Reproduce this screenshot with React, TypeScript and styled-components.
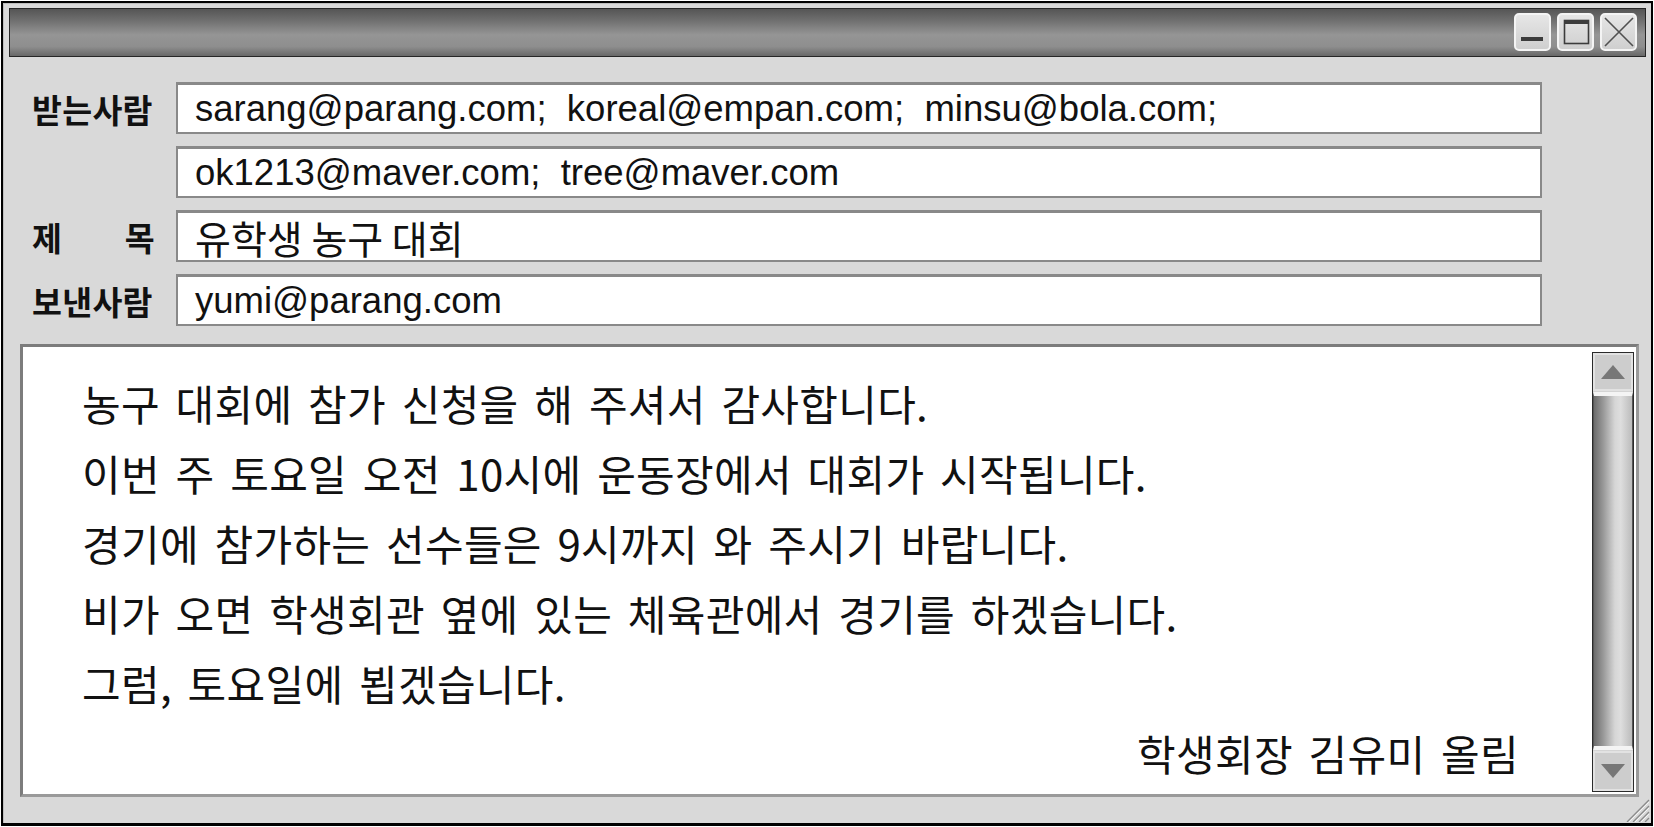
import React from "react";
import styled, { createGlobalStyle } from "styled-components";

const Global = createGlobalStyle`
  html, body { margin: 0; padding: 0; background: #fff; overflow: hidden; }
  #root { width: 1654px; height: 827px; }
`;

const Window = styled.div`
  position: relative;
  margin: 1px;
  width: 1652px;
  height: 825px;
  box-sizing: border-box;
  border: 2px solid #000;
  border-bottom-width: 3px;
  background: #d9d9d9;
  box-shadow: inset 1px 1px 0 #bdbdbd;
  display: flex;
  flex-direction: column;
`;

const TitleBar = styled.div`
  margin: 5px 5px 0 6px;
  height: 49px;
  box-sizing: border-box;
  border: 1px solid #262626;
  background: linear-gradient(
    to bottom,
    #555555 0%,
    #707070 25%,
    #959595 55%,
    #8e8e8e 80%,
    #686868 100%
  );
  display: flex;
  justify-content: flex-end;
  align-items: flex-start;
  gap: 6px;
  padding: 4px 8px 0 0;
`;

const TitleButton = styled.div`
  width: 37px;
  height: 38px;
  box-sizing: border-box;
  border: 2px solid #f4f4f4;
  border-radius: 5px;
  background: linear-gradient(to bottom, #e6e6e6, #cfcfcf);
  display: flex;
  align-items: center;
  justify-content: center;
`;

const Form = styled.div`
  margin: 25px 0 0 29px;
  display: grid;
  grid-template-columns: 123px 1366px;
  column-gap: 21px;
  row-gap: 12px;
`;

const Label = styled.div<{ $spread?: boolean }>`
  height: 52px;
  display: flex;
  align-items: center;
  justify-content: ${(p) => (p.$spread ? "space-between" : "flex-start")};
  font-family: "Noto Sans CJK KR", "Noto Sans", sans-serif;
  font-weight: 700;
  font-size: 32.5px;
  letter-spacing: 0.3px;
  color: #111;
  white-space: nowrap;
`;

const Field = styled.div<{ $korean?: boolean }>`
  height: 52px;
  box-sizing: border-box;
  background: #fff;
  border: 2px solid #898989;
  border-top-width: 3px;
  display: flex;
  align-items: center;
  padding-left: 17px;
  font-family: ${(p) =>
    p.$korean
      ? `"Noto Sans CJK KR", sans-serif`
      : `"Liberation Sans", Arial, sans-serif`};
  font-size: ${(p) => (p.$korean ? "39px" : "36.5px")};
  color: #111;
  white-space: pre;
`;

const TextArea = styled.div`
  flex: 1;
  margin: 18px 12px 26px 17px;
  box-sizing: border-box;
  background: #fff;
  border: 3px solid;
  border-color: #7c7c7c #9a9a9a #9a9a9a #7c7c7c;
  display: flex;
`;

const Content = styled.div`
  flex: 1;
  padding: 21px 73px 0 59px;
  font-family: "Noto Sans CJK KR", "Noto Sans", sans-serif;
  font-size: 42px;
  line-height: 70px;
  color: #111;
  word-spacing: 6px;
  letter-spacing: 0.3px;
`;

const Line = styled.div<{ $right?: boolean }>`
  white-space: nowrap;
  text-align: ${(p) => (p.$right ? "right" : "left")};
`;

const ScrollBar = styled.div`
  width: 42px;
  margin: 5px 2px 2px 0;
  box-sizing: border-box;
  border: 1px solid #2a2a2a;
  background: #d4d4d4;
  display: flex;
  flex-direction: column;
`;

const ScrollButton = styled.div<{ $h: number }>`
  height: ${(p) => p.$h}px;
  box-sizing: border-box;
  background: #cdcdcd;
  border: 2px solid #e2e2e2;
  display: flex;
  align-items: center;
  justify-content: center;
`;

const Thumb = styled.div`
  flex: 1;
  margin: 1px 0;
  border-top: 4px solid #f4f4f4;
  border-bottom: 4px solid #f4f4f4;
  border-left: 1px solid #555;
  border-right: 1px solid #555;
  background: linear-gradient(
    to right,
    #6c6c6c 0%,
    #9a9a9a 25%,
    #d6d6d6 55%,
    #dedede 70%,
    #bcbcbc 100%
  );
`;

const Grip = styled.svg`
  position: absolute;
  right: 1px;
  bottom: 1px;
`;

const bodyLines = [
  "농구 대회에 참가 신청을 해 주셔서 감사합니다.",
  "이번 주 토요일 오전 10시에 운동장에서 대회가 시작됩니다.",
  "경기에 참가하는 선수들은 9시까지 와 주시기 바랍니다.",
  "비가 오면 학생회관 옆에 있는 체육관에서 경기를 하겠습니다.",
  "그럼, 토요일에 뵙겠습니다.",
];

export default function App() {
  return (
    <>
      <Global />
      <Window>
        <TitleBar>
          <TitleButton>
            <svg width="30" height="30" viewBox="0 0 30 30">
              <rect x="3" y="20" width="22" height="4" fill="#3c3c3c" />
            </svg>
          </TitleButton>
          <TitleButton>
            <svg width="30" height="30" viewBox="0 0 30 30">
              <rect x="3.5" y="3.5" width="24" height="23" fill="none" stroke="#3c3c3c" strokeWidth="1.6" />
              <rect x="3" y="3" width="25" height="4" fill="#3c3c3c" />
            </svg>
          </TitleButton>
          <TitleButton>
            <svg width="30" height="30" viewBox="0 0 30 30">
              <path d="M1 1 L29 29 M29 1 L1 29" stroke="#505050" strokeWidth="1.6" />
            </svg>
          </TitleButton>
        </TitleBar>

        <Form>
          <Label>받는사람</Label>
          <Field>{"sarang@parang.com;  koreal@empan.com;  minsu@bola.com;"}</Field>
          <Label />
          <Field>{"ok1213@maver.com;  tree@maver.com"}</Field>
          <Label $spread>
            <span>제</span>
            <span>목</span>
          </Label>
          <Field $korean>유학생 농구 대회</Field>
          <Label>보낸사람</Label>
          <Field>yumi@parang.com</Field>
        </Form>

        <TextArea>
          <Content>
            {bodyLines.map((l) => (
              <Line key={l}>{l}</Line>
            ))}
            <Line $right>학생회장 김유미 올림</Line>
          </Content>
          <ScrollBar>
            <ScrollButton $h={38}>
              <svg width="26" height="16" viewBox="0 0 26 16">
                <polygon points="13,1 25,15 1,15" fill="#777" />
              </svg>
            </ScrollButton>
            <Thumb />
            <ScrollButton $h={40}>
              <svg width="26" height="16" viewBox="0 0 26 16">
                <polygon points="1,1 25,1 13,15" fill="#777" />
              </svg>
            </ScrollButton>
          </ScrollBar>
        </TextArea>

        <Grip width="28" height="26" viewBox="0 0 28 26">
          <path
            d="M27 4 L5 26 M27 10 L11 26 M27 16 L17 26 M27 22 L23 26"
            stroke="#8a8a8a"
            strokeWidth="1.3"
          />
          <path
            d="M27 6 L7 26 M27 12 L13 26 M27 18 L19 26"
            stroke="#f5f5f5"
            strokeWidth="1"
          />
        </Grip>
      </Window>
    </>
  );
}
